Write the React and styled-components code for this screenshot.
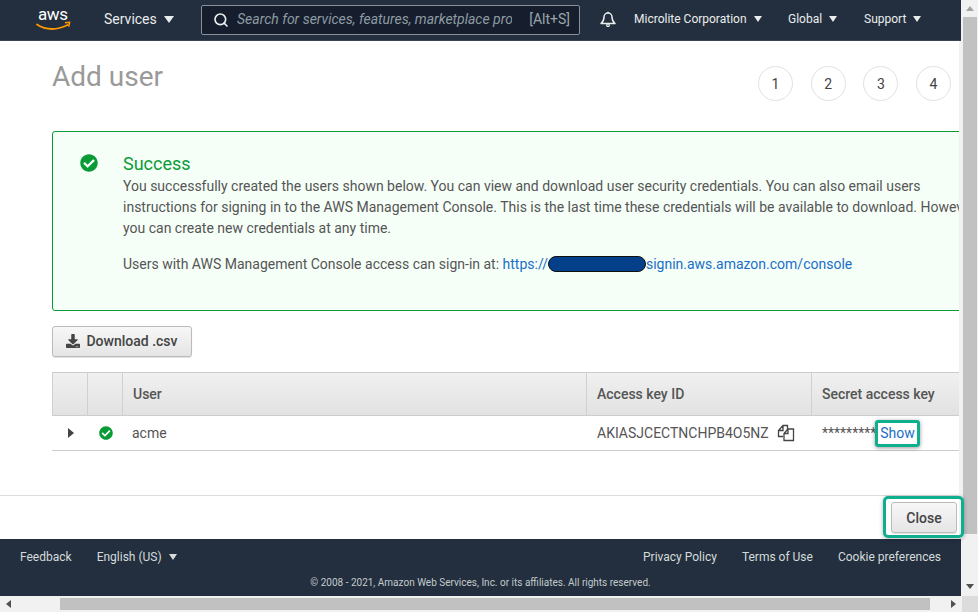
import styled, { createGlobalStyle } from "styled-components";
import { FaCheckCircle, FaDownload } from "react-icons/fa";
import { Search } from "lucide-react";

const GlobalStyle = createGlobalStyle`
  html, body {
    margin: 0;
    padding: 0;
    overflow: hidden;
  }
  body {
    font-family: Roboto, "Liberation Sans", sans-serif;
    font-size: 14px;
    color: #444;
  }
  * {
    box-sizing: border-box;
  }
`;

const steps = [1, 2, 3, 4];

const App = () => {
  return (
    <Page>
      <GlobalStyle />
      <Window>
        <Column>
          <Nav>
            <Logo viewBox="0 0 36 26" aria-label="aws">
              <text x="2" y="13" textLength="30" fontSize="17" fontFamily="Roboto, sans-serif" fill="#fff">
                aws
              </text>
              <path d="M1 17.5c4.500 3 9.500 4.500 15 4.500 5 0 10-1.300 15.500-4" fill="none" stroke="#f90" strokeWidth="1.800" strokeLinecap="round" />
              <path d="M29 15.800l4.600-.5-.9 4.400" fill="none" stroke="#f90" strokeWidth="1.500" />
            </Logo>
            <ServicesLink>
              Services <Caret $size={5} />
            </ServicesLink>
            <SearchBox>
              <Search size={16} strokeWidth={2.5} color="#eaeded" />
              <SearchText>Search for services, features, marketplace products, and docs</SearchText>
              <Shortcut>[Alt+S]</Shortcut>
            </SearchBox>
            <BellIcon viewBox="0 0 16 16">
              <path d="M1 12.500c2-1.500 3-3.300 3-6.500a4 4 0 0 1 8 0c0 3.200 1 5 3 6.500z" fill="none" stroke="#eaeded" strokeWidth="1.500" strokeLinejoin="round" />
              <circle cx="8" cy="14.300" r="1.300" fill="none" stroke="#eaeded" strokeWidth="1.200" />
              <path d="M8 0.800v1.200" stroke="#eaeded" strokeWidth="1.500" />
            </BellIcon>
            <NavLink $width={154}>
              Microlite Corporation <Caret $size={4} />
            </NavLink>
            <NavLink $width={76}>
              Global <Caret $size={4} />
            </NavLink>
            <NavLink $width={70}>
              Support <Caret $size={4} />
            </NavLink>
          </Nav>
          <Content>
            <Scroller>
              <TitleRow>
                <Title>Add user</Title>
                <Steps>
                  {steps.map((s) => (
                    <Step key={s}>{s}</Step>
                  ))}
                </Steps>
              </TitleRow>
              <Alert>
                <AlertIcon>
                  <FaCheckCircle size={18} color="#0a9b37" />
                </AlertIcon>
                <AlertBody>
                  <AlertTitle>Success</AlertTitle>
                  <AlertText>
                    You successfully created the users shown below. You can view and download user security credentials. You can also email users
                    <br />
                    instructions for signing in to the AWS Management Console. This is the last time these credentials will be available to download. However,
                    <br />
                    you can create new credentials at any time.
                  </AlertText>
                  <AlertText $gap>
                    Users with AWS Management Console access can sign-in at: <Link>https://</Link>
                    <Redacted />
                    <Link>signin.aws.amazon.com/console</Link>
                  </AlertText>
                </AlertBody>
              </Alert>
              <Button $wide>
                <FaDownload size={14} color="#444" />
                Download .csv
              </Button>
              <Table>
                <HeadCell />
                <HeadCell />
                <HeadCell>User</HeadCell>
                <HeadCell>Access key ID</HeadCell>
                <HeadCell>Secret access key</HeadCell>
                <BodyCell $center>
                  <RowCaret />
                </BodyCell>
                <BodyCell $center>
                  <RowCheck size={14} color="#0a9b37" />
                </BodyCell>
                <BodyCell>acme</BodyCell>
                <BodyCell $indent>
                  AKIASJCECTNCHPB4O5NZ
                  <CopyIcon viewBox="0 0 18 18">
                    <path d="M6 12.500H1.500V6.500L6 1.500h4.500v3.500M6 1.500v5H1.500" fill="none" stroke="#444" strokeWidth="1.300" />
                    <path d="M7 9.500l4-4.500h5.500v11.500H7zM11 5v4.500H7" fill="#fff" stroke="#444" strokeWidth="1.300" />
                  </CopyIcon>
                </BodyCell>
                <BodyCell $indent>
                  <Stars>*********</Stars>
                  <ShowLink>Show</ShowLink>
                </BodyCell>
              </Table>
            </Scroller>
            <ActionBar>
              <CloseWrap>
                <Button>Close</Button>
              </CloseWrap>
            </ActionBar>
          </Content>
          <Footer>
            <FooterRow>
              <FooterLink>Feedback</FooterLink>
              <FooterLink>
                English (US) <Caret $size={4} />
              </FooterLink>
              <FooterSpacer />
              <FooterLink>Privacy Policy</FooterLink>
              <FooterLink>Terms of Use</FooterLink>
              <FooterLink>Cookie preferences</FooterLink>
            </FooterRow>
            <Copyright>© 2008 - 2021, Amazon Web Services, Inc. or its affiliates. All rights reserved.</Copyright>
          </Footer>
        </Column>
        <VerticalBar>
          <ArrowUp />
          <VerticalThumb />
          <ArrowDown />
        </VerticalBar>
      </Window>
      <HorizontalBar>
        <ArrowLeft />
        <HorizontalThumb />
        <ArrowRight />
        <Corner />
      </HorizontalBar>
    </Page>
  );
};

const Page = styled.div`
  width: 978px;
  height: 612px;
  display: flex;
  flex-direction: column;
  background: #f1f1f1;
  overflow: hidden;
`;

const Window = styled.div`
  flex: 1;
  min-height: 0;
  display: flex;
`;

const Column = styled.div`
  width: 961px;
  display: flex;
  flex-direction: column;
`;

const Caret = styled.span`
  display: inline-block;
  width: 0;
  height: 0;
  margin-left: 4px;
  vertical-align: 1px;
  border-left: ${(p) => p.$size}px solid transparent;
  border-right: ${(p) => p.$size}px solid transparent;
  border-top: ${(p) => p.$size + 2}px solid currentColor;
`;

const Nav = styled.div`
  height: 41px;
  display: flex;
  align-items: center;
  background: #232f3e;
  border-bottom: 1px solid #3a4553;
  color: #eaeded;
`;

const Logo = styled.svg`
  width: 36px;
  height: 26px;
  margin-left: 36px;
  flex: none;
`;

const ServicesLink = styled.div`
  width: 97px;
  margin-left: 32px;
  padding-bottom: 2px;
  flex: none;
  font-size: 14px;
  white-space: nowrap;
`;

const SearchBox = styled.div`
  width: 379px;
  height: 30px;
  flex: none;
  display: flex;
  align-items: center;
  padding: 0 9px 0 11px;
  background: #161e2d;
  border: 1px solid #879196;
  border-radius: 2px;
`;

const SearchText = styled.div`
  width: 275px;
  margin-left: 8px;
  padding-bottom: 2px;
  overflow: hidden;
  white-space: nowrap;
  font-style: italic;
  font-size: 14px;
  color: #8d9ba3;
`;

const Shortcut = styled.div`
  margin-left: auto;
  padding-bottom: 2px;
  font-size: 14px;
  color: #9aa5ab;
`;

const BellIcon = styled.svg`
  width: 16px;
  height: 16px;
  margin: 0 18px 2px 20px;
  flex: none;
`;

const NavLink = styled.div`
  width: ${(p) => p.$width}px;
  padding-bottom: 2px;
  flex: none;
  font-size: 12px;
  white-space: nowrap;
`;

const Content = styled.div`
  width: 959px;
  flex: 1;
  min-height: 0;
  display: flex;
  flex-direction: column;
  background: #fff;
`;

const Scroller = styled.div`
  flex: 1;
  min-height: 0;
  overflow: hidden;
  padding: 0 0 0 52px;
`;

const TitleRow = styled.div`
  height: 90px;
  display: flex;
  justify-content: space-between;
  padding: 25px 8px 0 0;
`;

const Title = styled.h1`
  margin: 0;
  font-size: 28px;
  font-weight: 400;
  line-height: 22px;
  color: #9a9a9a;
`;

const Steps = styled.div`
  width: 193px;
  display: flex;
  justify-content: space-between;
`;

const Step = styled.div`
  width: 35px;
  height: 35px;
  display: flex;
  align-items: center;
  justify-content: center;
  border: 1px solid #e1e1e1;
  border-radius: 50%;
  font-size: 14px;
  color: #444;
`;

const Alert = styled.div`
  width: 1100px;
  height: 180px;
  display: flex;
  background: #f5fff8;
  border: 1px solid #0a9b37;
  border-radius: 3px;
`;

const AlertIcon = styled.div`
  width: 70px;
  padding: 22px 0 0 27px;
  flex: none;
`;

const AlertBody = styled.div`
  padding-top: 20px;
`;

const AlertTitle = styled.div`
  font-size: 18px;
  line-height: 24px;
  color: #0a9b37;
`;

const AlertText = styled.div`
  margin-top: ${(p) => (p.$gap ? "15px" : "0")};
  line-height: 21px;
  white-space: nowrap;
  color: #555;
`;

const Link = styled.a`
  color: #1a6ec7;
`;

const Redacted = styled.span`
  display: inline-block;
  width: 98px;
  height: 16px;
  vertical-align: -3px;
  background: #043f8a;
  border: 1px solid #111;
  border-radius: 8px;
`;

const Button = styled.button`
  display: inline-flex;
  align-items: center;
  justify-content: center;
  gap: 6px;
  width: ${(p) => (p.$wide ? "140px" : "66px")};
  height: 31px;
  margin-top: ${(p) => (p.$wide ? "15px" : "0")};
  padding: 0 0 ${(p) => (p.$wide ? "2px" : "0")} 0;
  background: linear-gradient(#f7f7f7, #e5e5e5);
  border: 1px solid #bbb;
  border-radius: 3px;
  box-shadow: 0 1px 1px rgba(0, 0, 0, 0.12);
  font-family: inherit;
  font-size: 14px;
  font-weight: 500;
  color: #444;
`;

const Table = styled.div`
  width: 1000px;
  margin-top: 15px;
  display: grid;
  grid-template-columns: 35px 35px 464px 225px 1fr;
  grid-template-rows: 44px 35px;
`;

const HeadCell = styled.div`
  display: flex;
  align-items: center;
  padding-left: 10px;
  background: linear-gradient(#f0f0f0, #e2e2e2);
  border-top: 1px solid #ccc;
  border-bottom: 1px solid #ccc;
  border-left: 1px solid #d0d0d0;
  font-weight: 500;
  color: #555;
`;

const BodyCell = styled.div`
  display: flex;
  align-items: center;
  justify-content: ${(p) => (p.$center ? "center" : "flex-start")};
  padding-left: ${(p) => (p.$center ? "0" : p.$indent ? "11px" : "10px")};
  border-bottom: 1px solid #ccc;
  color: #555;
`;

const RowCaret = styled.span`
  width: 0;
  height: 0;
  margin-left: 2px;
  border-top: 5px solid transparent;
  border-bottom: 5px solid transparent;
  border-left: 6px solid #444;
`;

const RowCheck = styled(FaCheckCircle)`
  margin-left: 2px;
`;

const CopyIcon = styled.svg`
  width: 18px;
  height: 18px;
  margin-left: 8px;
`;

const Stars = styled.span`
  white-space: nowrap;
`;

const ShowLink = styled.a`
  margin-left: -1px;
  padding: 0 2px;
  height: 27px;
  line-height: 21px;
  color: #1a6ec7;
  border: 3px solid #0fae8f;
  border-radius: 3px;
  box-shadow: 0 1px 4px rgba(0, 0, 0, 0.4);
`;

const ActionBar = styled.div`
  height: 44px;
  display: flex;
  align-items: center;
  justify-content: flex-end;
  padding-right: 2px;
  border-top: 1px solid #ddd;
`;

const CloseWrap = styled.div`
  position: relative;
  display: flex;
  &::after {
    content: "";
    position: absolute;
    inset: -6px -7px -5px -8px;
    border: 3px solid #0fae8f;
    border-radius: 5px;
    box-shadow: 0 1px 4px rgba(0, 0, 0, 0.3);
  }
`;

const Footer = styled.div`
  height: 57px;
  background: #232f3e;
  color: #d5dbdb;
`;

const FooterRow = styled.div`
  display: flex;
  gap: 25px;
  padding: 10px 20px 0 20px;
  font-size: 12px;
  line-height: 17px;
`;

const FooterLink = styled.div`
  white-space: nowrap;
`;

const FooterSpacer = styled.div`
  flex: 1;
`;

const Copyright = styled.div`
  margin-top: 10px;
  text-align: center;
  font-size: 10px;
  line-height: 14px;
  color: #c4cacc;
`;

const VerticalBar = styled.div`
  width: 17px;
  display: flex;
  flex-direction: column;
  align-items: center;
`;

const VerticalThumb = styled.div`
  width: 14px;
  height: 517px;
  background: #c1c1c1;
`;

const ArrowUp = styled.div`
  width: 0;
  height: 0;
  margin: 6px 0 6px;
  border-left: 4px solid transparent;
  border-right: 4px solid transparent;
  border-bottom: 5px solid #a3a3a3;
`;

const ArrowDown = styled.div`
  width: 0;
  height: 0;
  margin-top: 50px;
  border-left: 4px solid transparent;
  border-right: 4px solid transparent;
  border-top: 5px solid #505050;
`;

const HorizontalBar = styled.div`
  height: 16px;
  flex: none;
  display: flex;
  align-items: center;
`;

const ArrowLeft = styled.div`
  width: 0;
  height: 0;
  margin: 0 49px 0 6px;
  border-top: 4px solid transparent;
  border-bottom: 4px solid transparent;
  border-right: 5px solid #505050;
`;

const HorizontalThumb = styled.div`
  width: 870px;
  height: 12px;
  background: #c1c1c1;
`;

const ArrowRight = styled.div`
  width: 0;
  height: 0;
  margin-left: 21px;
  border-top: 4px solid transparent;
  border-bottom: 4px solid transparent;
  border-left: 5px solid #505050;
`;

const Corner = styled.div`
  flex: 1;
  height: 16px;
  margin-left: 6px;
  background: #dcdcdc;
`;

export default App;
